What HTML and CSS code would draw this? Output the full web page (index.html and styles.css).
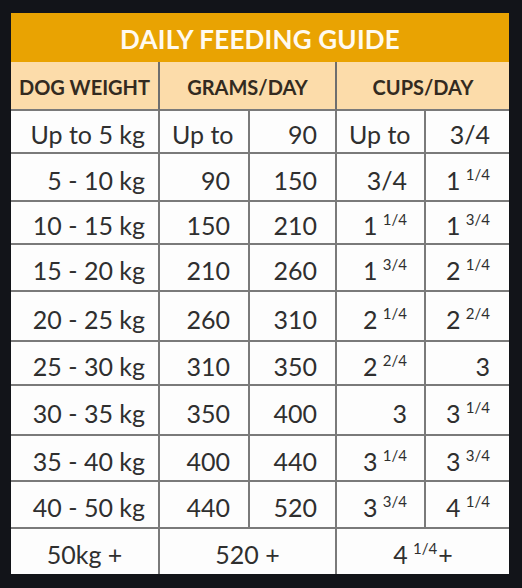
FILE: index.html
```html
<!DOCTYPE html>
<html>
<head>
<meta charset="utf-8">
<link rel="stylesheet" href="styles.css">
</head>
<body>
<div class="guide">
  <div class="title">DAILY FEEDING GUIDE</div>
  <div class="head h1">DOG WEIGHT</div>
  <div class="head h2">GRAMS/DAY</div>
  <div class="head h3">CUPS/DAY</div>

  <div class="cell w">Up to 5 kg</div><div class="cell g1 l">Up to</div><div class="cell g2">90</div><div class="cell k1 l">Up to</div><div class="cell k2">3/4</div>
  <div class="cell w">5 - 10 kg</div><div class="cell g1">90</div><div class="cell g2">150</div><div class="cell k1">3/4</div><div class="cell k2"><span>1 <sup>1/4</sup></span></div>
  <div class="cell w">10 - 15 kg</div><div class="cell g1">150</div><div class="cell g2">210</div><div class="cell k1"><span>1 <sup>1/4</sup></span></div><div class="cell k2"><span>1 <sup>3/4</sup></span></div>
  <div class="cell w">15 - 20 kg</div><div class="cell g1">210</div><div class="cell g2">260</div><div class="cell k1"><span>1 <sup>3/4</sup></span></div><div class="cell k2"><span>2 <sup>1/4</sup></span></div>
  <div class="cell w">20 - 25 kg</div><div class="cell g1">260</div><div class="cell g2">310</div><div class="cell k1"><span>2 <sup>1/4</sup></span></div><div class="cell k2"><span>2 <sup>2/4</sup></span></div>
  <div class="cell w">25 - 30 kg</div><div class="cell g1">310</div><div class="cell g2">350</div><div class="cell k1"><span>2 <sup>2/4</sup></span></div><div class="cell k2">3</div>
  <div class="cell w">30 - 35 kg</div><div class="cell g1">350</div><div class="cell g2">400</div><div class="cell k1">3</div><div class="cell k2"><span>3 <sup>1/4</sup></span></div>
  <div class="cell w">35 - 40 kg</div><div class="cell g1">400</div><div class="cell g2">440</div><div class="cell k1"><span>3 <sup>1/4</sup></span></div><div class="cell k2"><span>3 <sup>3/4</sup></span></div>
  <div class="cell w">40 - 50 kg</div><div class="cell g1">440</div><div class="cell g2">520</div><div class="cell k1"><span>3 <sup>3/4</sup></span></div><div class="cell k2"><span>4 <sup>1/4</sup></span></div>
  <div class="cell c last s1">50kg +</div><div class="cell c last s2">520 +</div><div class="cell c last s3"><span>4 <sup class="tight">1/4</sup>+</span></div>
</div>
</body>
</html>
```
FILE: styles.css
```css
html, body {
  margin: 0;
  padding: 0;
  background: #121419;
}
body {
  width: 522px;
  height: 588px;
  overflow: hidden;
  padding: 13px 0 0 11px;
  box-sizing: border-box;
}
.guide {
  display: grid;
  width: 498px;
  grid-template-columns: 149px 90px 87px 89px 83px;
  grid-template-rows: 49px 49px 43px 48px 43px 47px 50px 44px 50px 46px 47px 45px;
  font-family: "Lato", "DejaVu Sans", sans-serif;
  color: #2f2f2f;
  background: #fdfdfd;
}
.guide > div {
  box-sizing: border-box;
  display: flex;
  align-items: center;
  white-space: nowrap;
}

.title {
  grid-column: 1 / 6;
  background: #e9a302;
  color: #fffaf0;
  justify-content: center;
  font-size: 26px;
  font-weight: 700;
  letter-spacing: 0.2px;
  padding-top: 2px;
}
.head {
  background: #fcdcaa;
  color: #332a20;
  justify-content: center;
  font-size: 20px;
  font-weight: 700;
  border-bottom: 2px solid #7a7a7a;
  padding-top: 2px;
}
.h1 { border-right: 2px solid #6e6e6e; }
.h2 { grid-column: 2 / 4; border-right: 2px solid #6e6e6e; }
.h3 { grid-column: 4 / 6; }

.cell {
  font-size: 25px;
  justify-content: flex-end;
  border-bottom: 2px solid #7a7a7a;
  border-right: 2px solid #7a7a7a;
  padding-top: 5px;
}
.cell.k2 { border-right: none; }
.cell.last { border-bottom: none; }

.w { padding-right: 13px; }
.g1 { padding-right: 18px; }
.g2 { padding-right: 18px; }
.k1 { padding-right: 17px; }
.k2 { padding-right: 19px; }
.cell.l { justify-content: flex-start; padding-left: 12px; padding-right: 0; }
.cell.c { justify-content: center; padding-right: 0; }
.s2 { grid-column: 2 / 4; }
.s3 { grid-column: 4 / 6; border-right: none; }

sup {
  font-size: 15px;
  vertical-align: 0;
  position: relative;
  top: -10px;
  line-height: 0;
  margin-left: -1px;
}
sup.tight { margin-right: 1px; }
```
